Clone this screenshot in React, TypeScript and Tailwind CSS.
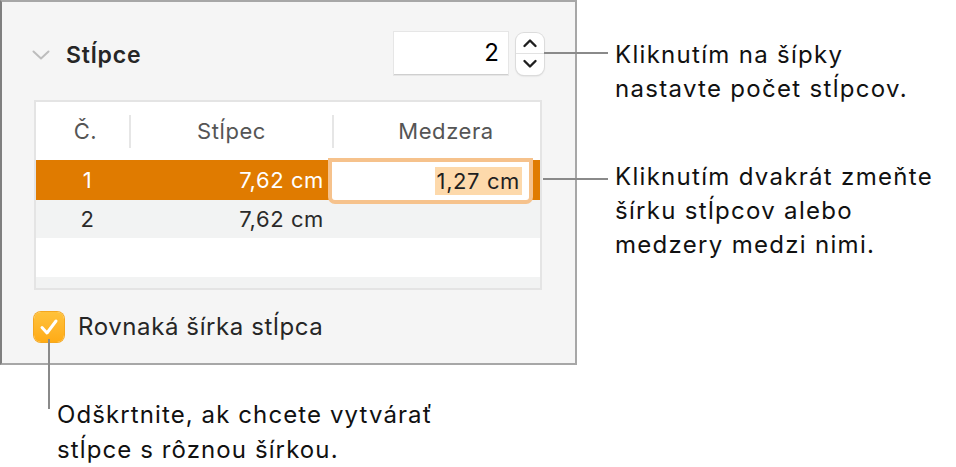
const font = "font-['Inter','Liberation_Sans',sans-serif]";

function Chevron({ up }: { up?: boolean }) {
  return (
    <svg width="16" height="10" viewBox="0 0 16 10">
      <path
        d={up ? "M2.5 8 L8 2.5 L13.5 8" : "M2.5 2 L8 7.5 L13.5 2"}
        fill="none"
        stroke="#1f1f1f"
        strokeWidth="2.4"
        strokeLinecap="round"
        strokeLinejoin="round"
      />
    </svg>
  );
}

function Panel() {
  return (
    <div className="w-[577px] h-[365px] shrink-0 border-2 border-[#a7a7a7] border-l-[#7f7f7f] bg-[#f5f5f5] flex flex-col pt-[30px] pl-[30px] pr-[31px]">
      {/* header */}
      <div className="flex items-center h-[43px]">
        <svg width="18" height="10" viewBox="0 0 18 10" className="mr-[16px] mt-[3px]">
          <path d="M1.5 1.5 L9 8.5 L16.5 1.5" fill="none" stroke="#bdbdbd" strokeWidth="2" strokeLinecap="round" strokeLinejoin="round" />
        </svg>
        <span className="text-[23px] font-semibold text-[#262626] tracking-[0.8px] mt-[3px]">Stĺpce</span>
        <div className="ml-auto flex items-center gap-[8px]">
          <div className="w-[114px] h-[43px] bg-white border-b border-[#cfcfcf] shadow-[0_0_0_1px_#e6e6e6] flex items-center justify-end pr-[9px] text-[24px] text-black">
            2
          </div>
          <div className="w-[28px] h-[42px] bg-white rounded-[8px] shadow-[0_0_0_1px_#dcdcdc,0_1px_2px_rgba(0,0,0,0.18)] flex flex-col">
            <div className="flex-1 flex items-center justify-center border-b border-[#e2e2e2]">
              <Chevron up />
            </div>
            <div className="flex-1 flex items-center justify-center">
              <Chevron />
            </div>
          </div>
        </div>
      </div>

      {/* table */}
      <div className="mt-[25px] ml-[2px] mr-[2px] h-[190px] border-2 border-[#e4e4e4] bg-white flex flex-col text-[22px] tracking-[0.6px]">
        <div className="h-[58px] grid grid-cols-[93px_203px_1fr] items-center text-[#555]">
          <div className="text-center pl-[6px]">Č.</div>
          <div className="h-[33px] border-l-2 border-[#e6e6e6] flex items-center justify-center">Stĺpec</div>
          <div className="h-[33px] border-l-2 border-[#e6e6e6] flex items-center justify-center pl-[18px]">Medzera</div>
        </div>
        <div className="h-[40px] grid grid-cols-[93px_203px_1fr] bg-[#e07b00] text-white">
          <div className="flex items-center justify-center pl-[10px]">1</div>
          <div className="flex items-center justify-end pr-[8px]">7,62 cm</div>
          <div className="pt-[2px] pr-[11px]">
            <div className="relative h-full bg-white rounded-b-[3px] shadow-[0_0_0_4px_#f6c28c] flex items-center justify-end pr-[7px] text-[#1f1f1f]">
              <span className="bg-[#fdd9ab] px-[2px] leading-[28px]">1,27 cm</span>
            </div>
          </div>
        </div>
        <div className="h-[38px] grid grid-cols-[93px_203px_1fr] bg-[#f2f3f3] text-[#2a2a2a]">
          <div className="flex items-center justify-center pl-[10px]">2</div>
          <div className="flex items-center justify-end pr-[8px]">7,62 cm</div>
          <div />
        </div>
        <div className="h-[39px] bg-white" />
        <div className="flex-1 bg-[#f2f3f3]" />
      </div>

      {/* checkbox */}
      <div className="mt-[19px] ml-[2px] flex items-center">
        <div className="w-[30px] h-[30px] rounded-[7px] bg-gradient-to-b from-[#ffc23a] to-[#ffab14] shadow-[0_0_0_1px_#f4a71f] flex items-center justify-center">
          <svg width="20" height="18" viewBox="0 0 20 18">
            <path d="M3 9.5 L8 15 L17 3" fill="none" stroke="white" strokeWidth="3" strokeLinecap="round" strokeLinejoin="round" />
          </svg>
        </div>
        <span className="ml-[14px] text-[24px] tracking-[0.6px] text-[#262626]">Rovnaká šírka stĺpca</span>
      </div>
    </div>
  );
}

export default function App() {
  return (
    <div className={`${font} relative w-[956px] h-[467px] bg-white overflow-hidden`}>
      <div className="flex">
        <Panel />
        <div className="pl-[38px] text-[24px] leading-[34px] tracking-[1.3px] text-[#111]">
          <p className="mt-[38px]">
            Kliknutím na šípky
            <br />
            nastavte počet stĺpcov.
          </p>
          <p className="mt-[54px]">
            Kliknutím dvakrát zmeňte
            <br />
            šírku stĺpcov alebo
            <br />
            medzery medzi nimi.
          </p>
        </div>
      </div>
      <p className="pl-[57px] mt-[32px] text-[24px] leading-[35px] tracking-[1.1px] text-[#111]">
        Odškrtnite, ak chcete vytvárať
        <br />
        stĺpce s rôznou šírkou.
      </p>

      {/* leader lines */}
      <div className="absolute left-[544px] top-[52px] w-[64px] h-[2px] bg-[#8a8a8a]" />
      <div className="absolute left-[543px] top-[178px] w-[65px] h-[2px] bg-[#8a8a8a]" />
      <div className="absolute left-[48px] top-[339px] w-[2px] h-[70px] bg-[#8a8a8a]" />
    </div>
  );
}
